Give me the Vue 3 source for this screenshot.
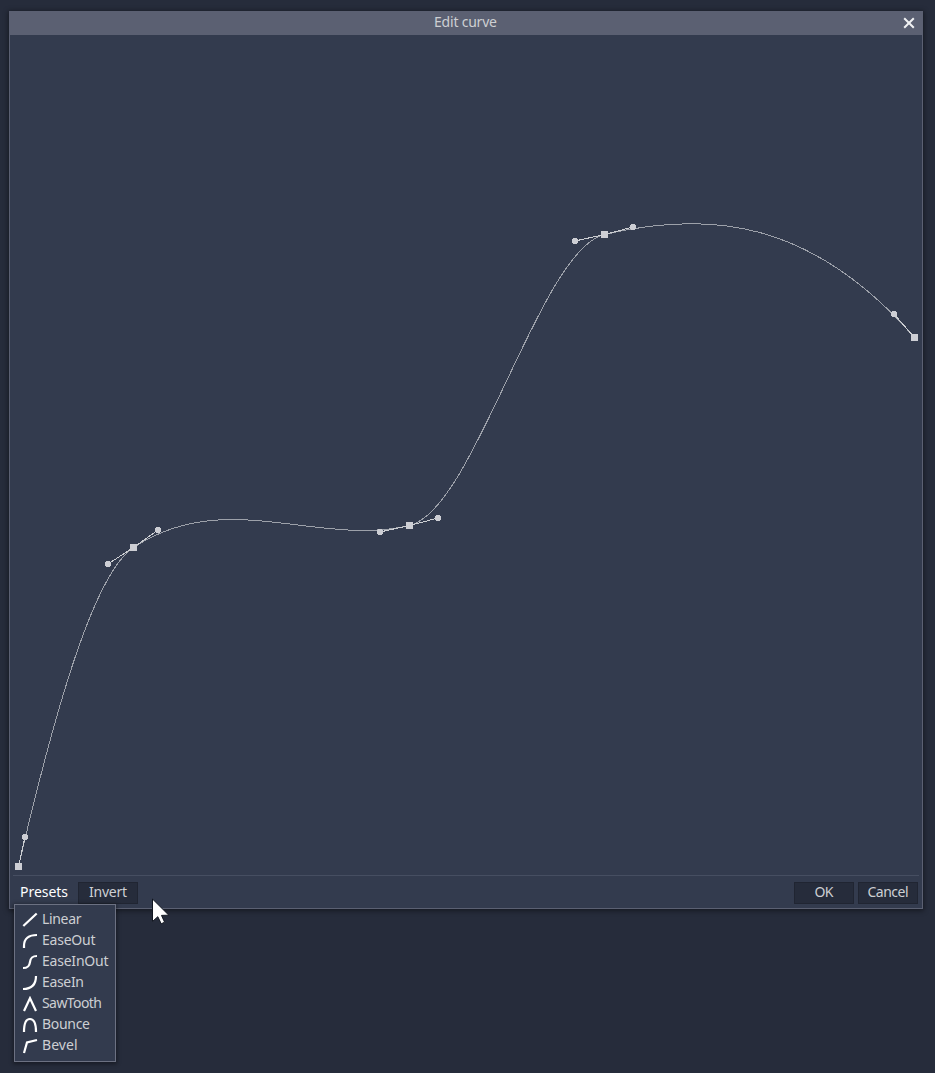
<script setup>
const points = [
  { x: 18.5, y: 866.5, out: [25, 837], slopeOut: -4.3 },
  { x: 133.5, y: 547.5, in: [108, 564], out: [158, 530], slopeIn: -0.66, slopeOut: -0.66 },
  { x: 409.5, y: 525.5, in: [380, 532], out: [438, 518], slopeIn: -0.236, slopeOut: -0.236 },
  { x: 604.5, y: 234.5, in: [575, 241], out: [633, 227], slopeIn: -0.236, slopeOut: -0.236 },
  { x: 914.5, y: 337.5, in: [894, 314], slopeIn: 1.146 },
]
// Each segment is a cubic whose control points sit at thirds of its width.
const curve = points.slice(1).reduce((d, b, i) => {
  const a = points[i]
  const t = (b.x - a.x) / 3
  return `${d} C${a.x + t} ${a.y + t * a.slopeOut} ${b.x - t} ${b.y - t * b.slopeIn} ${b.x} ${b.y}`
}, `M${points[0].x} ${points[0].y}`)
const handles = points.flatMap((p) => [p.in, p.out].filter(Boolean).map((h) => ({ p, x: h[0], y: h[1] })))

const presets = [
  { name: 'Linear', d: 'M1.3 14L14.7 1.5', w: 39.5 },
  { name: 'EaseOut', d: 'M2 15V13C2 5 7 2 15 2', w: 53.5 },
  { name: 'EaseInOut', d: 'M1 14C6 14 7.5 12 8 8C8.5 4 10 2 15 2', w: 66.5 },
  { name: 'EaseIn', d: 'M1 14C9 14 14 10 14 1', w: 42 },
  { name: 'SawTooth', d: 'M2 15L8 2.2L14 15', w: 60 },
  { name: 'Bounce', d: 'M2 15C2 6 4 2 8 2S14 6 14 15', w: 48 },
  { name: 'Bevel', d: 'M2 15L5 4.5L15 2', w: 35.5 },
]
</script>

<template>
  <div class="screen">
    <section class="dialog">
      <header class="title">
        <svg class="caption" width="64" height="24"><text x="0" y="16" textLength="63">Edit curve</text></svg>
        <svg class="close" width="12" height="12" viewBox="0 0 12 12"><path d="M1.2 1.2L10.8 10.8M10.8 1.2L1.2 10.8" /></svg>
      </header>
      <main class="canvas">
        <svg width="912" height="840" viewBox="10 35 912 840">
          <path class="curve" :d="curve" />
          <g v-for="(h, i) in handles" :key="i">
            <line class="arm" :x1="h.p.x" :y1="h.p.y" :x2="h.x" :y2="h.y" />
            <path class="knob" :d="`M${h.x - 2} ${h.y - 3}h4v1h1v4h-1v1h-4v-1h-1v-4h1z`" />
          </g>
          <rect v-for="p in points" :key="p.x" class="knob" :x="p.x - 3.5" :y="p.y - 3.5" width="7" height="7" />
        </svg>
      </main>
      <footer class="bar">
        <div class="presets"><svg width="49" height="22"><text x="0" y="15" textLength="48">Presets</text></svg></div>
        <div class="button"><svg width="39" height="20"><text x="0" y="14" textLength="38">Invert</text></svg></div>
        <span class="fill"></span>
        <div class="button"><svg width="20" height="20"><text x="0.5" y="14" textLength="19">OK</text></svg></div>
        <div class="button"><svg width="42" height="20"><text x="0.5" y="14" textLength="41">Cancel</text></svg></div>
      </footer>
    </section>

    <ul class="menu">
      <li v-for="p in presets" :key="p.name">
        <svg class="icon" width="16" height="16" viewBox="0 0 16 16"><path :d="p.d" /></svg>
        <svg width="70" height="21"><text x="0" y="15" :textLength="p.w">{{ p.name }}</text></svg>
      </li>
    </ul>

    <svg class="cursor" width="20" height="30" viewBox="0 0 20 30">
      <path d="M1.5 1L1.5 23.5L6.8 18.7L10.2 25.8L13.6 24.2L10.5 17.4L17.8 17.2Z" />
    </svg>
  </div>
</template>

<style>
body { margin: 0; background: #262c3b; }
</style>

<style scoped>
.screen {
  position: relative;
  box-sizing: border-box;
  width: 935px;
  height: 1073px;
  padding: 11px 0 0 9px;
  overflow: hidden;
  background: #262c3b;
  font-family: "Noto Sans", sans-serif;
  font-size: 14px;
}
svg { display: block; flex: none; }
text { fill: #cdcfd3; }
.dialog {
  box-sizing: border-box;
  width: 914px;
  height: 898px;
  border: 1px solid #5b6072;
  border-top: 0;
  background: #333b4e;
  box-shadow: 0 1px 5px 1px rgba(0, 0, 0, 0.42);
}
.title {
  display: flex;
  align-items: center;
  height: 24px;
  padding: 0 7px 0 424px;
  background: #5b6072;
}
.close { margin-left: auto; fill: none; stroke: #f0f1f3; stroke-width: 2; }
.canvas { height: 840px; }
.curve { fill: none; stroke: #9da1aa; stroke-width: 1; shape-rendering: crispEdges; }
.arm { stroke: #cdcfd3; stroke-width: 1; shape-rendering: crispEdges; }
.knob { fill: #cdced4; shape-rendering: crispEdges; }
.bar {
  display: flex;
  gap: 4px;
  height: 22px;
  margin: 0 3px;
  padding: 6px 1px 0;
  border-top: 1px solid #464e61;
}
.presets { width: 54px; padding-left: 6px; }
.presets text { fill: #fff; }
.button {
  box-sizing: border-box;
  display: flex;
  justify-content: center;
  width: 60px;
  height: 22px;
  border: 1px solid #202532;
  background: #262c3b;
}
.fill { flex: 1; }
.menu {
  position: absolute;
  left: 14px;
  top: 904px;
  box-sizing: border-box;
  width: 102px;
  height: 158px;
  margin: 0;
  padding: 4px 0 0 7px;
  list-style: none;
  border: 1px solid #6c7182;
  background: #333b4e;
  box-shadow: 0 1px 4px 1px rgba(0, 0, 0, 0.4);
}
.menu li { display: flex; gap: 4px; height: 21px; }
.icon { margin-top: 3px; fill: none; stroke: #fff; stroke-width: 2.2; }
.cursor { position: absolute; left: 151px; top: 898px; fill: #fff; stroke: #111620; stroke-width: 1; }
</style>
